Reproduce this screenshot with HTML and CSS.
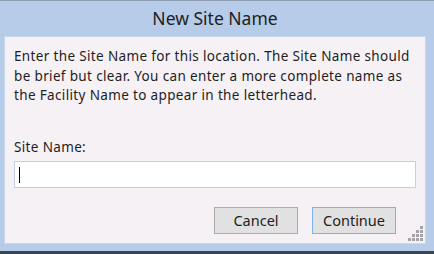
FILE: index.html
```html
<!DOCTYPE html>
<html>
<head>
    <title>New Site Name</title>
    <link rel="stylesheet" href="styles.css">
</head>
<body>
    <div class="window">
        <div class="title">New Site Name</div>
        <div class="panel">
            <p class="intro">Enter the Site Name for this location. The Site Name should be brief but clear. You can enter a more complete name as the Facility Name to appear in the letterhead.</p>
            <label class="label" for="siteName">Site Name:</label>
            <div class="field"><span class="caret"></span></div>
            <div class="buttons">
                <button class="button">Cancel</button>
                <button class="button default">Continue</button>
            </div>
            <svg class="grip" width="16" height="16" viewBox="0 0 16 16">
                <g fill="#a4a4a8">
                    <rect x="12" y="0" width="3" height="3"/>
                    <rect x="8" y="4" width="3" height="3"/>
                    <rect x="12" y="4" width="3" height="3"/>
                    <rect x="4" y="8" width="3" height="3"/>
                    <rect x="8" y="8" width="3" height="3"/>
                    <rect x="12" y="8" width="3" height="3"/>
                    <rect x="0" y="12" width="3" height="3"/>
                    <rect x="4" y="12" width="3" height="3"/>
                    <rect x="8" y="12" width="3" height="3"/>
                    <rect x="12" y="12" width="3" height="3"/>
                </g>
            </svg>
        </div>
    </div>
</body>
</html>
```

FILE: styles.css
```css
body {
    margin: 0;
    font-family: "Noto Sans", sans-serif;
    background: #3c4650;
}
.window {
    width: 434px;
    height: 251px;
    box-sizing: border-box;
    background: #b6cce8;
    border-top: 1px solid #8c9cb0;
    padding: 0 8px 0 4px;
    display: flex;
    flex-direction: column;
}
.title {
    height: 35px;
    line-height: 34px;
    text-align: center;
    font-size: 17.5px;
    color: #1e1e1e;
}
.panel {
    position: relative;
    height: 208px;
    box-sizing: border-box;
    background: #f6f1f5;
    border: 1px solid #c9d8ea;
    padding: 10px 9px 0 9px;
}
.intro {
    margin: 0;
    font-size: 13.5px;
    letter-spacing: 0.35px;
    line-height: 19.5px;
    color: #1e1e1e;
}
.label {
    display: block;
    margin-top: 33px;
    font-size: 13.5px;
    letter-spacing: 0.35px;
    line-height: 16px;
    color: #1e1e1e;
}
.field {
    margin: 6px 0 0 0;
    height: 27px;
    box-sizing: border-box;
    background: #ffffff;
    border: 1px solid #c3d0dd;
    padding: 5px 0 0 4px;
}
.caret {
    display: block;
    width: 1px;
    height: 16px;
    background: #000;
}
.buttons {
    display: flex;
    justify-content: flex-end;
    gap: 14px;
    margin-top: 19px;
    padding-right: 20px;
}
.button {
    width: 84px;
    height: 27px;
    box-sizing: border-box;
    background: #e1e1e1;
    border: 1px solid #adadad;
    font-family: "Noto Sans", sans-serif;
    font-size: 14.5px;
    color: #1e1e1e;
    padding: 0;
}
.default {
    border-color: #7ab4ee;
}
.grip {
    position: absolute;
    right: 1px;
    bottom: 1px;
}
```
